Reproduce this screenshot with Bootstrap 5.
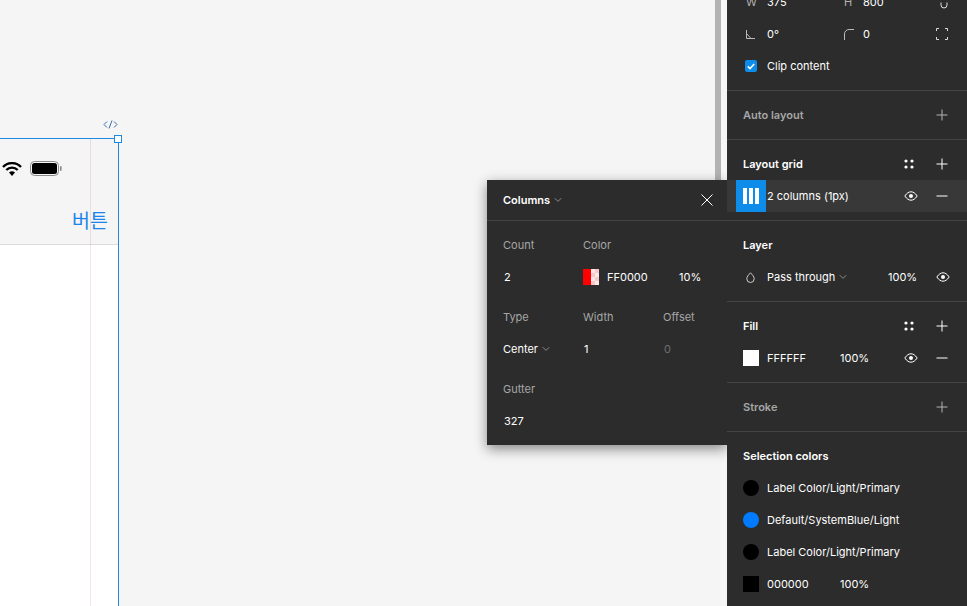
<!DOCTYPE html>
<html lang="ko">
<head>
    <meta charset="UTF-8">
    <meta name="viewport" content="width=device-width, initial-scale=1.0">
    <title>Layout grid</title>
    <link href="https://cdn.jsdelivr.net/npm/bootstrap@5.3.0/dist/css/bootstrap.min.css" rel="stylesheet">
    <style>
        html, body { height: 100%; overflow: hidden; }
        body { background: #f5f5f5; font-family: Inter, "Noto Sans CJK KR", sans-serif; font-size: 11px; line-height: 16px; color: #fff; }
        svg { display: block; flex: none; }

        /* 캔버스 */
        .app-root { height: 606px; }
        .canvas-area { width: 727px; position: relative; background: #f5f5f5; overflow: hidden; }
        .frame-box { position: absolute; left: -260px; top: 138px; width: 379px; height: 500px; border: 1px solid #1e88e5; background: transparent; }
        .frame-head { height: 106px; border-bottom: 1px solid #dcdcdc; }
        .frame-body { height: 400px; background: #fff; }
        .grid-line { position: absolute; left: 349px; top: 0; bottom: 0; width: 1px; background: rgba(160, 80, 80, .15); }
        .frame-status { position: absolute; right: 56px; top: 22px; gap: 8px; }
        .frame-btn { position: absolute; right: 10px; top: 68px; color: #1a84ea; font-size: 19.5px; line-height: 26px; font-family: "Noto Sans CJK KR", sans-serif; }
        .frame-handle { position: absolute; left: 114px; top: 135px; width: 8px; height: 8px; background: #fff; border: 1px solid #1e88e5; }
        .frame-code { position: absolute; left: 103px; top: 119px; }
        .canvas-scroll { position: absolute; left: 715px; top: 0; width: 6px; height: 200px; background: #b3b3b3; }

        /* 오른쪽 패널 */
        .side-panel { width: 240px; height: 606px; background: #2c2c2c; overflow: hidden; }
        .panel-group { border-bottom: 1px solid #444; padding: 0 16px; }
        .panel-row { height: 32px; display: flex; align-items: center; }
        .panel-title { font-weight: 600; color: #fff; }
        .panel-title-off { font-weight: 600; color: #a6a6a6; }
        .dim-label { color: #b3b3b3; width: 21px; margin-left: 3px; }
        .dim-label-h { width: 19px; }
        .dim-gap { width: 74px; }
        .grid-row { height: 32px; background: #383838; margin: 0 -16px; padding: 0 16px 0 9px; display: flex; align-items: center; }
        .grid-swatch { width: 30px; height: 32px; background: #0d8ce9; display: flex; align-items: center; justify-content: center; gap: 2px; margin-right: 1px; }
        .grid-swatch span { width: 4px; height: 16px; background: #fff; }
        .fill-chip { width: 16px; height: 16px; flex: none; margin-right: 8px; }
        .hex-cell { width: 73px; }
        .blue-chip { background: #007aff; }
        .layer-mode { width: 121px; }
        .clip-check { width: 12px; height: 12px; background: #0d8ce9; border-radius: 2px; margin: 0 10px 0 2px; display: flex; align-items: center; justify-content: center; }
        .row-end { margin-right: 3px; }
        .row-dots { margin-right: 22px; }
        .row-eye { margin-right: 18px; }
        .row-eye-last { margin-right: 1px; }
        .top-row { margin-top: -14px; }
        .link-mark { margin-top: 6px; }
        .title-row { height: 40px; padding-top: 8px; }
        .bar-row { height: 48px; }
        .group-end { margin-bottom: 8px; }

        /* 컬럼 팝업 */
        .grid-popup { position: absolute; left: 487px; top: 180px; width: 240px; height: 265px; background: #2c2c2c; box-shadow: 0 4px 12px rgba(0, 0, 0, .45); z-index: 5; }
        .popup-head { height: 41px; border-bottom: 1px solid #444; padding: 0 12px 0 16px; }
        .popup-body { padding: 8px 16px 0; }
        .popup-grid { display: grid; grid-template-columns: 80px 80px 64px; grid-auto-rows: 32px; row-gap: 8px; align-items: center; }
        .popup-label { color: #a6a6a6; }
        .popup-val { padding-left: 1px; color: #fff; }
        .popup-muted { color: #6e6e6e; padding-left: 1px; }
        .popup-pct { padding-left: 16px; }
        .swatch-half { width: 16px; height: 16px; margin-right: 8px; background: linear-gradient(90deg, #f00 50%, transparent 50%), repeating-conic-gradient(#f9c9c9 0 25%, #fde9e9 0 50%) 0 0 / 8px 8px; }
    </style>
</head>
<body>
    <div class="app-root d-flex">
        <div class="canvas-area flex-shrink-0">
            <div class="frame-box">
                <div class="frame-head"></div>
                <div class="frame-body"></div>
                <div class="grid-line"></div>
                <div class="frame-status d-flex align-items-center">
                    <svg width="20" height="14" viewBox="0 0 20 14"><path d="M1 5 A12.5 12.5 0 0 1 19 5" fill="none" stroke="#000" stroke-width="2.4"/><path d="M4.3 8 A8 8 0 0 1 15.7 8" fill="none" stroke="#000" stroke-width="2.4"/><path d="M10 14 L7 10.6 A4.5 4.5 0 0 1 13 10.6 Z" fill="#000"/></svg>
                    <svg width="32" height="15" viewBox="0 0 32 15"><rect x=".5" y=".5" width="28" height="14" rx="4" fill="none" stroke="#8a8a8a"/><rect x="2" y="2" width="25" height="11" rx="2.5" fill="#000"/><rect x="30" y="5" width="1.6" height="5" rx=".8" fill="#8a8a8a"/></svg>
                </div>
                <div class="frame-btn">버튼</div>
            </div>
            <div class="frame-handle"></div>
            <svg class="frame-code" width="15" height="11" viewBox="0 0 15 11" fill="none" stroke="#3a6ea5" stroke-width="1"><path d="M4 2.5 1 5.5l3 3M11 2.5l3 3-3 3M9 1.5 6 9.5"/></svg>
            <div class="canvas-scroll"></div>

            <div class="grid-popup">
                <div class="popup-head d-flex align-items-center justify-content-between">
                    <div class="d-flex align-items-center gap-1">
                        <span class="panel-title">Columns</span>
                        <svg width="8" height="6" viewBox="0 0 8 6" fill="none" stroke="#8c8c8c"><path d="M.8 1.2 4 4.4l3.2-3.2"/></svg>
                    </div>
                    <svg width="16" height="16" viewBox="0 0 16 16" fill="none" stroke="#fff" stroke-width="1"><path d="M2.5 2.5l11 11M13.5 2.5l-11 11"/></svg>
                </div>
                <div class="popup-body">
                    <div class="popup-grid">
                        <div class="popup-label">Count</div>
                        <div class="popup-label">Color</div>
                        <div></div>
                    </div>
                    <div class="popup-grid">
                        <div class="popup-val">2</div>
                        <div class="d-flex align-items-center text-nowrap"><span class="swatch-half"></span>FF0000</div>
                        <div class="popup-pct">10%</div>
                    </div>
                    <div class="popup-grid mt-2">
                        <div class="popup-label">Type</div>
                        <div class="popup-label">Width</div>
                        <div class="popup-label">Offset</div>
                    </div>
                    <div class="popup-grid">
                        <div class="d-flex align-items-center gap-1">Center <svg width="8" height="6" viewBox="0 0 8 6" fill="none" stroke="#8c8c8c"><path d="M.8 1.2 4 4.4l3.2-3.2"/></svg></div>
                        <div class="popup-val">1</div>
                        <div class="popup-muted">0</div>
                    </div>
                    <div class="popup-grid mt-2">
                        <div class="popup-label">Gutter</div>
                    </div>
                    <div class="popup-grid">
                        <div class="popup-val">327</div>
                    </div>
                </div>
            </div>
        </div>

        <div class="side-panel flex-shrink-0">
            <div class="panel-group">
                <div class="panel-row top-row">
                    <span class="dim-label">W</span><span class="dim-gap">375</span>
                    <span class="dim-label dim-label-h">H</span><span class="flex-grow-1">800</span>
                    <svg class="row-end link-mark" width="8" height="7" viewBox="0 0 8 7" fill="none" stroke="#ddd"><path d="M1 .5v2.500a3 3 0 0 0 6 0v-2.500"/></svg>
                </div>
                <div class="panel-row">
                    <span class="dim-label"><svg width="9" height="9" viewBox="0 0 9 9" fill="none" stroke="#bbb"><path d="M.5 0v8.500H9M.5 3.500 5 8.500"/></svg></span><span class="dim-gap">0°</span>
                    <span class="dim-label dim-label-h"><svg width="11" height="11" viewBox="0 0 11 11" fill="none" stroke="#bbb"><path d="M.5 11V5A4.500 4.500 0 0 1 5 .5h5"/></svg></span><span class="flex-grow-1">0</span>
                    <svg class="row-end" width="12" height="12" viewBox="0 0 12 12" fill="none" stroke="#ddd"><path d="M.5 3V.5H3M9 .5h2.500V3M11.500 9v2.500H9M3 11.500H.5V9"/></svg>
                </div>
                <div class="panel-row group-end">
                    <span class="clip-check"><svg width="8" height="7" viewBox="0 0 8 7" fill="none" stroke="#fff" stroke-width="1.5"><path d="M.8 3.400 3 5.600 7.200 1"/></svg></span>Clip content
                </div>
            </div>
            <div class="panel-group">
                <div class="panel-row bar-row justify-content-between">
                    <span class="panel-title-off">Auto layout</span>
                    <svg class="row-end" width="12" height="12" viewBox="0 0 12 12" stroke="#b3b3b3"><path d="M6 .5v11M.5 6h11"/></svg>
                </div>
            </div>
            <div class="panel-group">
                <div class="panel-row title-row">
                    <span class="panel-title flex-grow-1">Layout grid</span>
                    <svg class="row-dots" width="10" height="10" viewBox="0 0 10 10" fill="#fff"><circle cx="2" cy="2" r="1.600"/><circle cx="8" cy="2" r="1.600"/><circle cx="2" cy="8" r="1.600"/><circle cx="8" cy="8" r="1.600"/></svg>
                    <svg class="row-end" width="12" height="12" viewBox="0 0 12 12" stroke="#fff"><path d="M6 .5v11M.5 6h11"/></svg>
                </div>
                <div class="grid-row">
                    <div class="grid-swatch"><span></span><span></span><span></span></div>
                    <span class="flex-grow-1">2 columns (1px)</span>
                    <svg class="row-eye" width="14" height="10" viewBox="0 0 14 10" fill="none" stroke="#fff"><path d="M.8 5C3 1.800 5 .8 7 .8s4 1 6.200 4.200C11 8.200 9 9.200 7 9.200S3 8.200.8 5Z"/><circle cx="7" cy="5" r="2" fill="#fff" stroke="none"/></svg>
                    <svg class="row-end" width="12" height="2" viewBox="0 0 12 2" stroke="#fff"><path d="M.5 1h11"/></svg>
                </div>
                <div class="group-end"></div>
            </div>
            <div class="panel-group">
                <div class="panel-row title-row"><span class="panel-title">Layer</span></div>
                <div class="panel-row group-end">
                    <span class="dim-label"><svg width="9" height="11" viewBox="0 0 9 11" fill="none" stroke="#ccc"><path d="M4.500 .8C6.500 3 8.200 4.600 8.200 6.800a3.700 3.700 0 0 1-7.400 0C.8 4.600 2.500 3 4.500 .8Z"/></svg></span>
                    <span class="d-flex align-items-center gap-1 layer-mode">Pass through <svg width="8" height="6" viewBox="0 0 8 6" fill="none" stroke="#8c8c8c"><path d="M.8 1.200 4 4.400l3.200-3.200"/></svg></span>
                    <span class="flex-grow-1">100%</span>
                    <svg class="row-eye-last" width="14" height="10" viewBox="0 0 14 10" fill="none" stroke="#fff"><path d="M.8 5C3 1.800 5 .8 7 .8s4 1 6.200 4.200C11 8.200 9 9.200 7 9.200S3 8.200.8 5Z"/><circle cx="7" cy="5" r="2" fill="#fff" stroke="none"/></svg>
                </div>
            </div>
            <div class="panel-group">
                <div class="panel-row title-row">
                    <span class="panel-title flex-grow-1">Fill</span>
                    <svg class="row-dots" width="10" height="10" viewBox="0 0 10 10" fill="#fff"><circle cx="2" cy="2" r="1.600"/><circle cx="8" cy="2" r="1.600"/><circle cx="2" cy="8" r="1.600"/><circle cx="8" cy="8" r="1.600"/></svg>
                    <svg class="row-end" width="12" height="12" viewBox="0 0 12 12" stroke="#fff"><path d="M6 .5v11M.5 6h11"/></svg>
                </div>
                <div class="panel-row group-end">
                    <span class="fill-chip bg-white"></span>
                    <span class="hex-cell">FFFFFF</span>
                    <span class="flex-grow-1">100%</span>
                    <svg class="row-eye" width="14" height="10" viewBox="0 0 14 10" fill="none" stroke="#fff"><path d="M.8 5C3 1.800 5 .8 7 .8s4 1 6.200 4.200C11 8.200 9 9.200 7 9.200S3 8.200.8 5Z"/><circle cx="7" cy="5" r="2" fill="#fff" stroke="none"/></svg>
                    <svg class="row-end" width="12" height="2" viewBox="0 0 12 2" stroke="#fff"><path d="M.5 1h11"/></svg>
                </div>
            </div>
            <div class="panel-group">
                <div class="panel-row bar-row justify-content-between">
                    <span class="panel-title-off">Stroke</span>
                    <svg class="row-end" width="12" height="12" viewBox="0 0 12 12" stroke="#b3b3b3"><path d="M6 .5v11M.5 6h11"/></svg>
                </div>
            </div>
            <div class="panel-group border-0">
                <div class="panel-row title-row"><span class="panel-title">Selection colors</span></div>
                <div class="panel-row"><span class="fill-chip rounded-circle bg-black"></span>Label Color/Light/Primary</div>
                <div class="panel-row"><span class="fill-chip rounded-circle blue-chip"></span>Default/SystemBlue/Light</div>
                <div class="panel-row"><span class="fill-chip rounded-circle bg-black"></span>Label Color/Light/Primary</div>
                <div class="panel-row"><span class="fill-chip bg-black"></span><span class="hex-cell">000000</span><span>100%</span></div>
            </div>
        </div>
    </div>
    <script src="https://cdn.jsdelivr.net/npm/bootstrap@5.3.0/dist/js/bootstrap.bundle.min.js"></script>
</body>
</html>
